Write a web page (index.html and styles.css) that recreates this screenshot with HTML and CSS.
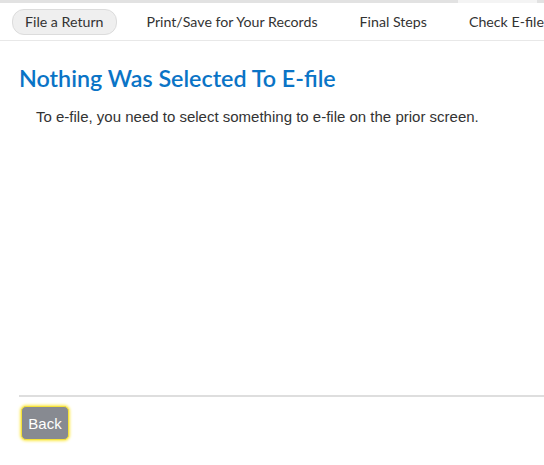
FILE: index.html
```html
<!DOCTYPE html>
<html>
<head>
<meta charset="utf-8">
<link rel="stylesheet" href="styles.css">
</head>
<body>
<div class="topstrip"><div class="seg-a"></div><div class="seg-b"></div><div class="seg-c"></div></div>
<nav class="tabs">
  <span class="tab active">File a Return</span>
  <span class="tab">Print/Save for Your Records</span>
  <span class="tab">Final Steps</span>
  <span class="tab">Check E-file</span>
</nav>
<main class="content">
  <h1 class="title">Nothing Was Selected To E-file</h1>
  <p class="msg">To e-file, you need to select something to e-file on the prior screen.</p>
</main>
<footer class="footer">
  <button class="back">Back</button>
</footer>
</body>
</html>
```
FILE: styles.css
```css
html, body { margin: 0; padding: 0; background: #fff; }
body { width: 544px; height: 465px; overflow: hidden; display: flex; flex-direction: column; }
.topstrip { display: flex; height: 3px; flex: none; }
.seg-a { width: 458px; background: #e2e2e2; }
.seg-b { width: 79px; background: #f4f4f4; }
.seg-c { flex: 1; background: #e2e2e2; }
.tabs { display: flex; align-items: center; gap: 42px; height: 37px; flex: none; border-bottom: 1px solid #e8e8e8; white-space: nowrap; overflow: hidden; font-family: Lato, "Noto Sans", sans-serif; font-size: 14.2px; color: #333; }
.tab { flex: none; }
.tab.active { margin-left: 12px; margin-right: -12px; padding: 3px 12px 4px; border: 1px solid #dcdcdc; border-radius: 12px; background: #efefef; }
.content { flex: 1; padding: 0 19px; }
.title { margin: 23px 0 0; font-family: Lato, "Noto Sans", sans-serif; font-weight: 600; font-size: 23.3px; color: #0a74c6; }
.msg { margin: 16px 0 0 17px; font-family: "Liberation Sans", Arial, sans-serif; font-size: 15px; color: #333; }
.footer { flex: none; margin-left: 19px; border-top: 2px solid #dedede; height: 70px; padding-top: 9px; box-sizing: border-box; }
.back { margin-left: 2px; width: 48px; height: 34px; background: #878a91; color: #fff; border: 1px solid #f5e23a; border-radius: 5px; box-shadow: 0 0 3px 1px #fbe94a; font-family: "Liberation Sans", Arial, sans-serif; font-size: 15px; padding: 0; }
```
